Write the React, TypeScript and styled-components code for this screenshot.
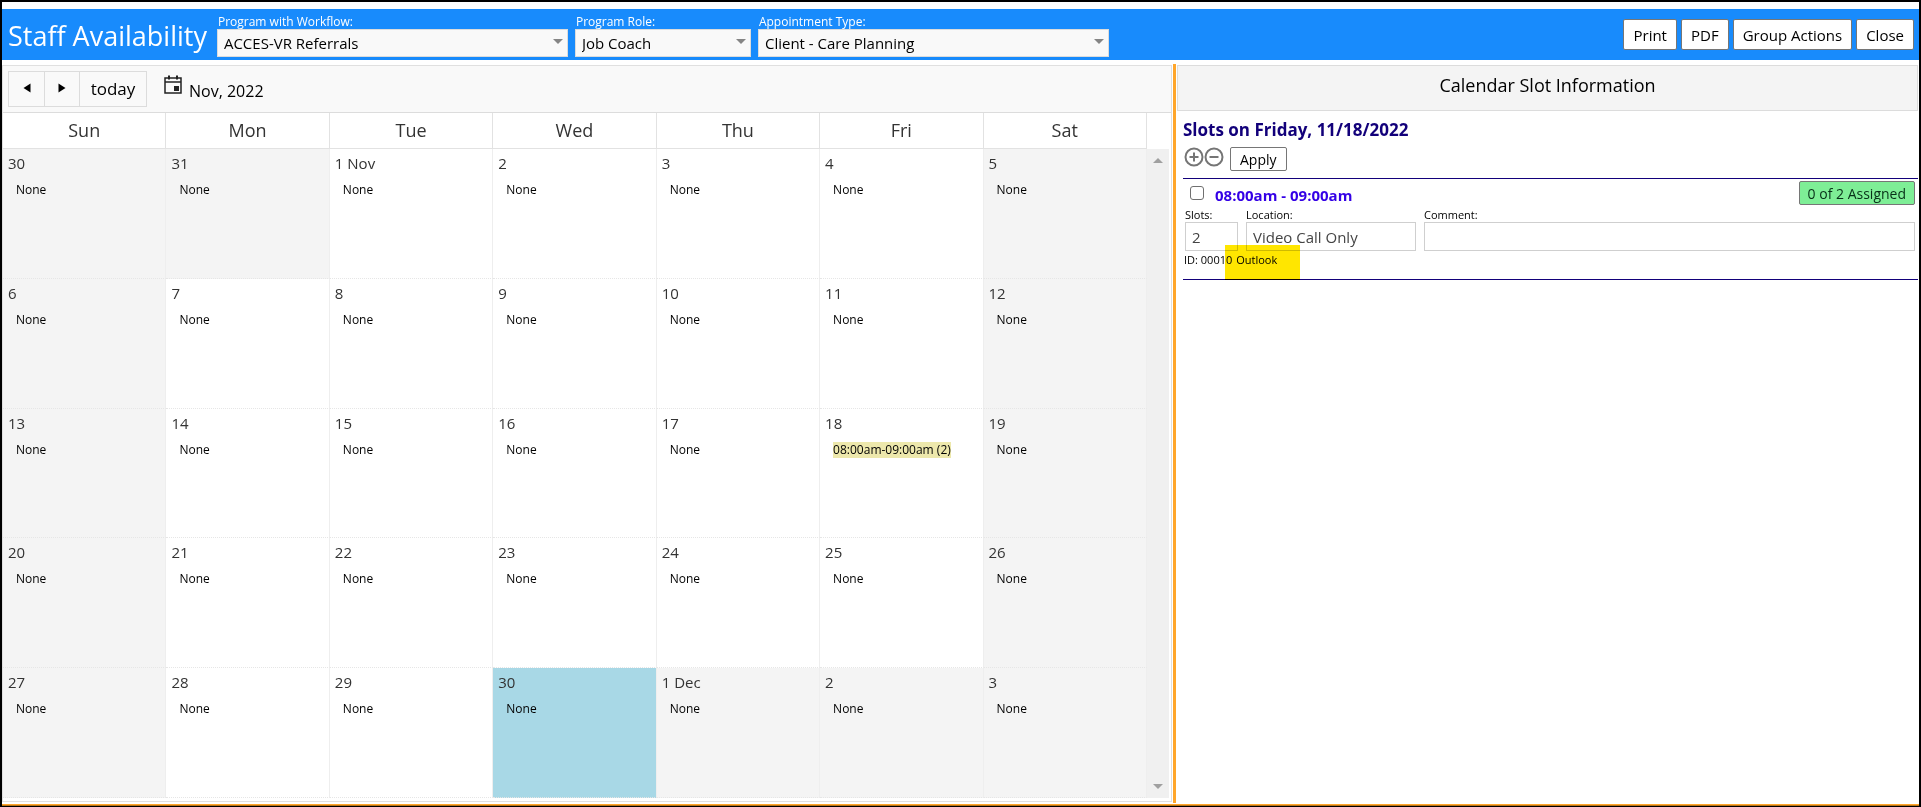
import React from "react";
import styled, { createGlobalStyle, css } from "styled-components";

const GlobalStyle = createGlobalStyle`
  *, *::before, *::after { box-sizing: border-box; }
  body { margin: 0; background: #fff; }
  body, button, input, select {
    font-family: "Open Sans", "Noto Sans", sans-serif;
    font-size: 15px;
    color: #000;
  }
`;

const Window = styled.div`
  min-height: 100vh;
  display: flex;
  flex-direction: column;
  padding-top: 7px;
  border: 2px solid #000;
  border-bottom-width: 1px;
`;

const AppHeader = styled.header`
  height: 51px;
  display: flex;
  align-items: center;
  gap: 7px;
  padding: 0 5px 0 6px;
  background: #188bfc;
`;

const AppTitle = styled.h1`
  margin: 0 3px 0 0;
  padding-top: 2px;
  font-size: 27px;
  line-height: 32px;
  font-weight: 400;
  color: #fff;
  white-space: nowrap;
`;

const Field = styled.label<{ $wide?: boolean }>`
  flex: 0 1 ${(p) => (p.$wide ? 351 : 176)}px;
  display: flex;
  flex-direction: column;
  padding-top: 2px;
`;

const FieldName = styled.span`
  font-size: 12px;
  line-height: 15px;
  font-weight: 500;
  color: #fff;
  padding-left: 1px;
  white-space: nowrap;
`;

const SelectBox = styled.span`
  position: relative;
  display: block;

  &::after {
    content: "";
    position: absolute;
    right: 5px;
    top: 10px;
    border: 5px solid transparent;
    border-top-color: #858585;
    border-bottom-width: 0;
    pointer-events: none;
  }
`;

const Select = styled.select`
  display: block;
  width: 100%;
  height: 28px;
  padding: 0 20px 0 6px;
  appearance: none;
  border: 1px solid #dcdcdc;
  border-radius: 0;
  background: #f9f9f9;
`;

const HeaderActions = styled.div`
  display: flex;
  gap: 4px;
  margin-left: auto;
`;

const Button = styled.button<{ $compact?: boolean }>`
  height: ${(p) => (p.$compact ? 24 : 31)}px;
  padding: 0 9px;
  border: 1px solid #767676;
  border-radius: 2px;
  background: #fff;
  white-space: nowrap;
  ${(p) => p.$compact && css`padding-top: 1px; font-size: 14px; line-height: 22px;`}
`;

const Main = styled.main`
  flex: 1;
  display: grid;
  grid-template-columns: minmax(0, 1170fr) 3px minmax(0, 742fr);
  column-gap: 1px;
  padding: 4px 0 1px;
`;

const Divider = styled.div`
  background: #ffa62b;
`;

const BottomBar = styled.div`
  height: 2px;
  background: #ffa62b;
  border-bottom: 1px solid #b8741a;
`;

const Calendar = styled.section`
  display: flex;
  flex-direction: column;
  margin: 1px 0;
  border: 1px solid #e0e0e0;
`;

const CalendarToolbar = styled.div`
  display: flex;
  align-items: center;
  height: 47px;
  padding: 0 5px;
  background: #f9f9f9;
  border-bottom: 1px solid #dcdcdc;
`;

const NavGroup = styled.div`
  display: flex;
  height: 36px;
  border: 1px solid #dcdcdc;
`;

const NavButton = styled.button<{ $wide?: boolean }>`
  width: ${(p) => (p.$wide ? 67 : 35)}px;
  padding: 0;
  border: 0;
  background: none;
  font-size: 17px;
  line-height: 24px;

  & + & { border-left: 1px solid #dcdcdc; }
`;

const MonthButton = styled.button`
  display: flex;
  align-items: flex-start;
  gap: 7px;
  margin-left: 17px;
  padding: 0;
  border: 0;
  background: none;
  font-size: 16px;
  line-height: 24px;

  span { padding-top: 4px; }
`;

const CalendarBody = styled.div`
  flex: 1;
  display: flex;
  padding: 0 2px 3px 0;
`;

const MonthTable = styled.table`
  flex: 1;
  width: 100%;
  table-layout: fixed;
  border-spacing: 0;
`;

const DayName = styled.th`
  height: 36px;
  padding: 0 0 2px;
  border-right: 1px solid #e2e2e2;
  border-bottom: 1px solid #e2e2e2;
  font-size: 18px;
  line-height: 24px;
  font-weight: 400;
  color: #333;
`;

const DayCell = styled.td<{ $tone?: "off" | "selected" }>`
  height: 129px;
  padding: 3px 5px 0;
  vertical-align: top;
  border-right: 1px solid #eee;
  border-bottom: 1px dotted #e6e6e6;
  background: ${(p) => (p.$tone === "off" ? "#f4f4f4" : p.$tone === "selected" ? "#a8d8e6" : "#fff")};
`;

const DayNumber = styled.div`
  font-size: 15px;
  line-height: 22px;
  color: #333;
`;

const DayEvent = styled.div`
  margin: 8px 0 0 8px;
  font-size: 12px;
  line-height: 16px;
  white-space: nowrap;
`;

const SlotMark = styled.span`
  display: inline-block;
  background: #ede8ac;
`;

const ScrollTrack = styled.div`
  width: 22px;
  margin-top: 36px;
  display: flex;
  flex-direction: column;
  justify-content: space-between;
  align-items: center;
  padding: 9px 0;
  background: #f0f0f0;
`;

const ScrollArrow = styled.span<{ $down?: boolean }>`
  border: 5px solid transparent;
  ${(p) =>
    p.$down
      ? css`border-top-color: #a0a0a0; border-bottom-width: 0;`
      : css`border-bottom-color: #a0a0a0; border-top-width: 0;`}
`;

const SlotPanel = styled.aside`
  margin-top: 1px;
  padding-right: 1px;
`;

const PanelTitle = styled.h2`
  margin: 0;
  height: 46px;
  line-height: 38px;
  border: 1px solid #dcdcdc;
  background: #f4f4f4;
  text-align: center;
  font-size: 18px;
  font-weight: 400;
`;

const PanelContent = styled.div`
  padding: 7px 0 0 6px;
`;

const SlotsHeading = styled.h3`
  margin: 0;
  font-size: 17px;
  line-height: 24px;
  font-weight: 700;
  color: #12007a;
`;

const SlotTools = styled.div`
  display: flex;
  padding: 5px 0 7px 1px;
`;

const IconButton = styled.button`
  width: 20px;
  height: 20px;
  padding: 0;
  border: 0;
  background: none;

  svg { display: block; }
  & + & { margin-right: 6px; }
`;

const SlotEntry = styled.div`
  height: 102px;
  border: solid #12007a;
  border-width: 1px 0;
`;

const SlotTop = styled.div`
  display: flex;
  justify-content: space-between;
  height: 31px;
  padding: 2px 3px 0 7px;
`;

const SlotTime = styled.label`
  display: flex;
  gap: 11px;
  font-size: 15px;
  line-height: 28px;
  font-weight: 700;
  color: #3400e6;
`;

const CheckBox = styled.input`
  width: 14px;
  height: 14px;
  margin: 5px 0 0;
  appearance: none;
  border: 1px solid #707070;
  border-radius: 3px;
  background: #fff;
`;

const AssignedButton = styled(Button)`
  padding: 1px 8px 0;
  background: #7eee96;
  color: #083018;
`;

const SlotFields = styled.div`
  display: grid;
  grid-template-columns: 53px 170px minmax(0, 1fr);
  gap: 8px;
  padding: 0 3px 0 2px;
`;

const SlotField = styled.label`
  font-size: 11px;
  line-height: 10px;
  display: flex;
  flex-direction: column;
  gap: 2px;
`;

const TextInput = styled.input`
  width: 100%;
  height: 29px;
  padding: 0 6px;
  border: 1px solid #cfcfcf;
  border-radius: 0;
  background: transparent;
  color: #444;
`;

const SlotMeta = styled.div`
  display: flex;
  gap: 4px;
  padding: 0 1px;
  font-size: 11px;
  line-height: 17px;
`;

const Source = styled.span`
  position: relative;

  &::before {
    content: "";
    position: absolute;
    left: -11px;
    top: -6px;
    width: 75px;
    height: 35px;
    background: #ffe600;
    mix-blend-mode: multiply;
  }
`;

interface Day {
  label: string;
  tone?: "off" | "selected";
  slot?: string;
}

const dayNames = ["Sun", "Mon", "Tue", "Wed", "Thu", "Fri", "Sat"];

const dayLabels = [
  "30", "31", "1 Nov", "2", "3", "4", "5",
  "6", "7", "8", "9", "10", "11", "12",
  "13", "14", "15", "16", "17", "18", "19",
  "20", "21", "22", "23", "24", "25", "26",
  "27", "28", "29", "30", "1 Dec", "2", "3",
];

const days: Day[] = dayLabels.map((label, i) => {
  const weekend = i % 7 === 0 || i % 7 === 6;
  const otherMonth = i < 2 || i > 31;
  return {
    label,
    tone: i === 31 ? "selected" : weekend || otherMonth ? "off" : undefined,
    slot: i === 19 ? "08:00am-09:00am (2)" : undefined,
  };
});

const weeks = [0, 1, 2, 3, 4].map((w) => days.slice(w * 7, w * 7 + 7));

const filters = [
  { name: "Program with Workflow:", value: "ACCES-VR Referrals", wide: true },
  { name: "Program Role:", value: "Job Coach", wide: false },
  { name: "Appointment Type:", value: "Client - Care Planning", wide: true },
];

const CircleIcon = ({ plus }: { plus?: boolean }) => (
  <svg width="20" height="20" viewBox="0 0 20 20" fill="none" stroke="#757575" strokeWidth="2">
    <circle cx="10" cy="10" r="8.5" />
    <path d={plus ? "M5.5 10h9M10 5.5v9" : "M5.5 10h9"} />
  </svg>
);

const Triangle = ({ left }: { left?: boolean }) => (
  <svg width="8" height="12" viewBox="0 0 8 12" aria-hidden="true">
    <path d={left ? "M7.5 0.5v9L0.5 5z" : "M0.5 0.5v9L7.5 5z"} fill="#000" />
  </svg>
);

const CalendarIcon = () => (
  <svg width="18" height="20" viewBox="0 0 18 20" fill="none" stroke="#222">
    <path d="M1 3h16v15H1z" strokeWidth="1.5" />
    <path d="M1 7h16" strokeWidth="1.5" />
    <path d="M5 0.5v4M13 0.5v4" strokeWidth="2" />
    <path d="M10 11h5v5h-5z" fill="#222" stroke="none" />
  </svg>
);

export default function App() {
  return (
    <Window>
      <GlobalStyle />
      <AppHeader>
        <AppTitle>Staff Availability</AppTitle>
        {filters.map((f) => (
          <Field key={f.name} $wide={f.wide}>
            <FieldName>{f.name}</FieldName>
            <SelectBox>
              <Select defaultValue={f.value}>
                <option>{f.value}</option>
              </Select>
            </SelectBox>
          </Field>
        ))}
        <HeaderActions>
          {["Print", "PDF", "Group Actions", "Close"].map((a) => (
            <Button key={a} type="button">{a}</Button>
          ))}
        </HeaderActions>
      </AppHeader>

      <Main>
        <Calendar>
          <CalendarToolbar>
            <NavGroup>
              <NavButton type="button" aria-label="Previous month"><Triangle left /></NavButton>
              <NavButton type="button" aria-label="Next month"><Triangle /></NavButton>
              <NavButton type="button" $wide>today</NavButton>
            </NavGroup>
            <MonthButton type="button">
              <CalendarIcon />
              <span>Nov, 2022</span>
            </MonthButton>
          </CalendarToolbar>
          <CalendarBody>
            <MonthTable>
              <thead>
                <tr>{dayNames.map((d) => <DayName key={d} scope="col">{d}</DayName>)}</tr>
              </thead>
              <tbody>
                {weeks.map((week, w) => (
                  <tr key={w}>
                    {week.map((day, d) => (
                      <DayCell key={d} $tone={day.tone}>
                        <DayNumber>{day.label}</DayNumber>
                        <DayEvent>{day.slot ? <SlotMark>{day.slot}</SlotMark> : "None"}</DayEvent>
                      </DayCell>
                    ))}
                  </tr>
                ))}
              </tbody>
            </MonthTable>
            <ScrollTrack>
              <ScrollArrow />
              <ScrollArrow $down />
            </ScrollTrack>
          </CalendarBody>
        </Calendar>

        <Divider />

        <SlotPanel>
          <PanelTitle>Calendar Slot Information</PanelTitle>
          <PanelContent>
            <SlotsHeading>Slots on Friday, 11/18/2022</SlotsHeading>
            <SlotTools>
              <IconButton type="button" aria-label="Add slot"><CircleIcon plus /></IconButton>
              <IconButton type="button" aria-label="Remove slot"><CircleIcon /></IconButton>
              <Button type="button" $compact>Apply</Button>
            </SlotTools>
            <SlotEntry>
              <SlotTop>
                <SlotTime>
                  <CheckBox type="checkbox" />
                  08:00am - 09:00am
                </SlotTime>
                <AssignedButton type="button" $compact>0 of 2 Assigned</AssignedButton>
              </SlotTop>
              <SlotFields>
                <SlotField>Slots:<TextInput defaultValue="2" /></SlotField>
                <SlotField>Location:<TextInput defaultValue="Video Call Only" /></SlotField>
                <SlotField>Comment:<TextInput defaultValue="" /></SlotField>
              </SlotFields>
              <SlotMeta>
                <span>ID: 00010</span>
                <Source>Outlook</Source>
              </SlotMeta>
            </SlotEntry>
          </PanelContent>
        </SlotPanel>
      </Main>
      <BottomBar />
    </Window>
  );
}
